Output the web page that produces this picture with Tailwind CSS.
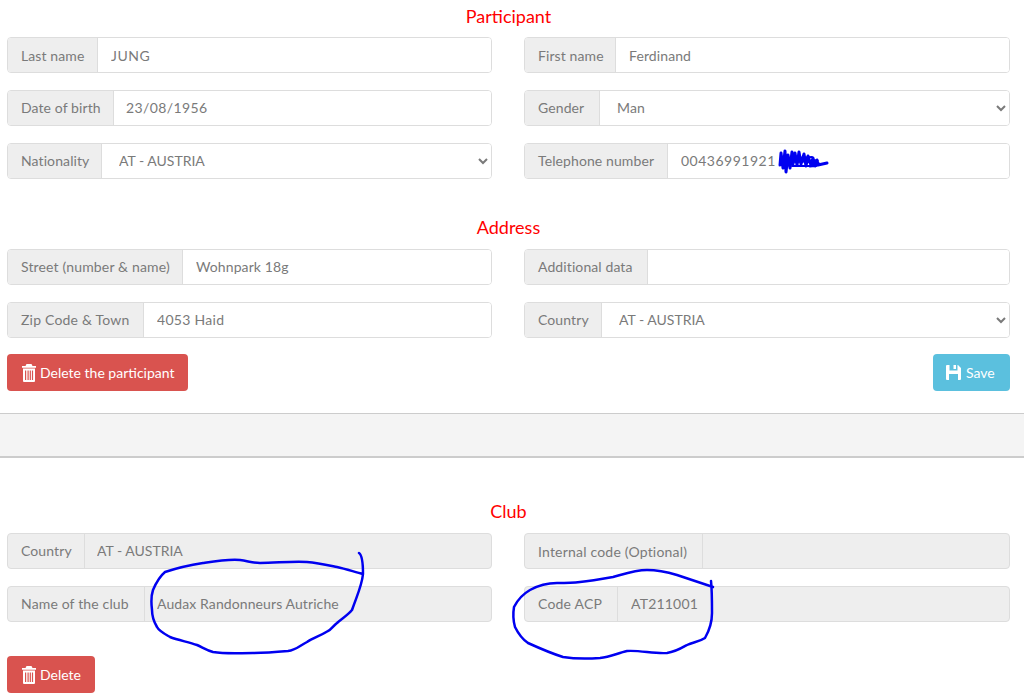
<!DOCTYPE html>
<html lang="en">
<head>
<meta charset="utf-8">
<title>Participant</title>
<script src="https://cdn.jsdelivr.net/npm/@tailwindcss/browser@4"></script>
</head>
<body class="bg-white font-['Lato',sans-serif] text-[14px] tracking-[0.1px] text-[#7a7a7a] overflow-hidden">
<div class="relative h-[700px] w-[1024px] overflow-hidden">

<section class="pl-[7px]">
  <h2 class="h-[37px] pt-[4px] text-center text-[18px] leading-[24px] tracking-normal text-[#ff0000] pr-[14px]">Participant</h2>
  <div class="grid grid-cols-[485px_486px] gap-x-[32px] gap-y-[17px]">
    <div class="flex h-[36px] rounded border border-[#ddd] overflow-hidden"><span class="flex w-[90px] shrink-0 items-center border-r border-[#ddd] bg-[#eee] pl-[13px]">Last name</span><input class="min-w-0 flex-1 bg-white px-[13px] tracking-[0.5px] outline-none" value="JUNG"></div>
    <div class="flex h-[36px] rounded border border-[#ddd] overflow-hidden"><span class="flex w-[91px] shrink-0 items-center border-r border-[#ddd] bg-[#eee] pl-[13px]">First name</span><input class="min-w-0 flex-1 bg-white px-[13px] outline-none" value="Ferdinand"></div>
    <div class="flex h-[36px] rounded border border-[#ddd] overflow-hidden"><span class="flex w-[106px] shrink-0 items-center border-r border-[#ddd] bg-[#eee] pb-[2px] pl-[13px]">Date of birth</span><input class="min-w-0 flex-1 bg-white px-[12px] pb-[2px] tracking-[0.4px] outline-none" value="23/08/1956"></div>
    <div class="flex h-[36px] rounded border border-[#ddd] overflow-hidden"><span class="flex w-[75px] shrink-0 items-center border-r border-[#ddd] bg-[#eee] pb-[2px] pl-[13px]">Gender</span><select class="min-w-0 flex-1 bg-white pb-[2px] pl-[13px] outline-none"><option>Man</option></select></div>
    <div class="flex h-[36px] rounded border border-[#ddd] overflow-hidden"><span class="flex w-[94px] shrink-0 items-center border-r border-[#ddd] bg-[#eee] pb-[2px] pl-[13px]">Nationality</span><select class="min-w-0 flex-1 bg-white pb-[2px] pl-[13px] tracking-normal outline-none"><option>AT - AUSTRIA</option></select></div>
    <div class="flex h-[36px] rounded border border-[#ddd] overflow-hidden"><span class="flex w-[143px] shrink-0 items-center border-r border-[#ddd] bg-[#eee] pb-[2px] pl-[13px]">Telephone number</span><input class="min-w-0 flex-1 bg-white px-[13px] pb-[2px] tracking-[0.5px] outline-none" value="00436991921"></div>
  </div>
</section>

<section class="pl-[7px]">
  <h2 class="h-[70px] pt-[36px] text-center text-[18px] leading-[24px] tracking-normal text-[#ff0000] pr-[14px]">Address</h2>
  <div class="grid grid-cols-[485px_486px] gap-x-[32px] gap-y-[17px]">
    <div class="flex h-[36px] rounded border border-[#ddd] overflow-hidden"><span class="flex w-[175px] shrink-0 items-center border-r border-[#ddd] bg-[#eee] pb-[2px] pl-[13px] tracking-[0.15px]">Street (number &amp; name)</span><input class="min-w-0 flex-1 bg-white px-[13px] pb-[2px] outline-none" value="Wohnpark 18g"></div>
    <div class="flex h-[36px] rounded border border-[#ddd] overflow-hidden"><span class="flex w-[123px] shrink-0 items-center border-r border-[#ddd] bg-[#eee] pb-[2px] pl-[13px]">Additional data</span><input class="min-w-0 flex-1 bg-white px-[13px] outline-none" value=""></div>
    <div class="flex h-[36px] rounded border border-[#ddd] overflow-hidden"><span class="flex w-[136px] shrink-0 items-center border-r border-[#ddd] bg-[#eee] pb-[2px] pl-[13px] tracking-[0.2px]">Zip Code &amp; Town</span><input class="min-w-0 flex-1 bg-white px-[13px] pb-[2px] tracking-[0.3px] outline-none" value="4053 Haid"></div>
    <div class="flex h-[36px] rounded border border-[#ddd] overflow-hidden"><span class="flex w-[77px] shrink-0 items-center border-r border-[#ddd] bg-[#eee] pb-[2px] pl-[13px]">Country</span><select class="min-w-0 flex-1 bg-white pb-[2px] pl-[13px] tracking-normal outline-none"><option>AT - AUSTRIA</option></select></div>
  </div>
  <div class="mt-[16px] flex w-[1003px] justify-between tracking-normal">
    <button class="flex h-[37px] w-[181px] items-center gap-[4px] rounded bg-[#d9534f] pl-[15px] text-white">
      <svg class="h-[18px] w-[14px]" viewBox="0 0 14 18" fill="white"><path fill-rule="evenodd" d="M4.500 0h5L10.500 2H14v1.700H0V2h3.500zM1 4.500h12V17a1 1 0 0 1-1 1H2a1 1 0 0 1-1-1zM3 6.500V16h1.200V6.500zM5.500 6.500V16h1.200V6.500zM7.700 6.500V16h1.200V6.500zM9.900 6.500V16h1.200V6.500z"/></svg>
      Delete the participant
    </button>
    <button class="flex h-[37px] w-[77px] items-center gap-[5px] rounded bg-[#5bc0de] pl-[13px] text-white">
      <svg class="h-[15px] w-[15px]" viewBox="0 0 15 15" fill="white"><path fill-rule="evenodd" d="M1 0h2.500v5.500h8V0H12l3 3v11a1 1 0 0 1-1 1h-2V9H3v6H1a1 1 0 0 1-1-1V1a1 1 0 0 1 1-1zM7.500 0H10v4H7.500z"/></svg>
      Save
    </button>
  </div>
</section>

<div class="mt-[22px] h-[45px] border-t border-b-2 border-t-[#ccc] border-b-[#ccc] bg-[#f4f4f4]"></div>

<section class="pl-[7px]">
  <h2 class="h-[75px] pt-[41px] text-center text-[18px] leading-[24px] tracking-normal text-[#ff0000] pr-[14px]">Club</h2>
  <div class="grid grid-cols-[485px_486px] gap-x-[32px] gap-y-[17px]">
    <div class="flex h-[36px] rounded border border-[#ddd] overflow-hidden bg-[#eee]"><span class="flex w-[77px] shrink-0 items-center border-r border-[#ddd] pb-[2px] pl-[13px]">Country</span><input disabled class="min-w-0 flex-1 px-[12px] pb-[2px] tracking-normal" value="AT - AUSTRIA"></div>
    <div class="flex h-[36px] rounded border border-[#ddd] overflow-hidden bg-[#eee]"><span class="flex w-[178px] shrink-0 items-center border-r border-[#ddd] pl-[13px] tracking-[0.2px]">Internal code (Optional)</span><input disabled class="min-w-0 flex-1 px-[13px]" value=""></div>
    <div class="flex h-[36px] rounded border border-[#ddd] overflow-hidden bg-[#eee]"><span class="flex w-[137px] shrink-0 items-center border-r border-[#ddd] pb-[2px] pl-[13px] tracking-[0.15px]">Name of the club</span><input disabled class="min-w-0 flex-1 px-[12px] pb-[2px]" value="Audax Randonneurs Autriche"></div>
    <div class="flex h-[36px] rounded border border-[#ddd] overflow-hidden bg-[#eee]"><span class="flex w-[93px] shrink-0 items-center border-r border-[#ddd] pb-[2px] pl-[13px] tracking-[0.2px]">Code ACP</span><input disabled class="min-w-0 flex-1 px-[13px] pb-[2px] tracking-[0.2px]" value="AT211001"></div>
  </div>
  <button class="mt-[34px] flex h-[37px] w-[88px] items-center gap-[4px] rounded bg-[#d9534f] pl-[15px] tracking-normal text-white">
    <svg class="h-[18px] w-[14px]" viewBox="0 0 14 18" fill="white"><path fill-rule="evenodd" d="M4.500 0h5L10.500 2H14v1.700H0V2h3.500zM1 4.500h12V17a1 1 0 0 1-1 1H2a1 1 0 0 1-1-1zM3 6.500V16h1.200V6.500zM5.500 6.500V16h1.200V6.500zM7.700 6.500V16h1.200V6.500zM9.900 6.500V16h1.200V6.500z"/></svg>
    Delete
  </button>
</section>

<svg class="pointer-events-none absolute left-0 top-0 h-[700px] w-[1024px]" viewBox="0 0 1024 700" fill="none" stroke="#0000f0" stroke-linecap="round" stroke-linejoin="round">
  <path stroke-width="2.500" d="M359 553C362 555 363 563 363 574C362 585 358 593 352 610C347 616 341 619 337 623C333 626 331 630 328 631C320 636 313 638 307 642C299 646 296 650 288 651C277 652 265 653 253 653C238 653 226 654 213 652C206 650 202 647 197 645C188 642 178 640 170 637C163 633 159 631 157 627C154 622 152 616 152 610C151 602 151 596 153 590C156 583 159 577 165 572C177 568 190 565 203 563C216 561 228 559 240 560C248 561 252 563 260 563C276 563 292 561 307 562C318 563 327 565 337 567C346 569 355 572 363 574"/>
  <path stroke-width="2.500" d="M711 581C712 590 712 602 712 613C712 622 709 631 705 638C699 642 693 642 687 645C680 649 675 652 667 653C654 654 640 650 627 651C618 653 610 657 600 658C587 659 575 659 563 657C550 653 539 648 528 643C522 639 518 633 515 627C513 620 513 613 514 607C518 599 523 594 530 590C539 585 548 583 557 583C565 583 572 583 580 582C591 581 602 579 613 577C624 574 635 570 647 570C657 570 667 572 677 575C689 579 701 583 713 587"/>
  <path stroke-width="3" d="M780 165L781 153L783 168L785 151L786 172L788 155L790 168L792 152L793 164L795 153L797 165L799 152L801 164L804 154L806 166L808 156L811 165L813 158L815 166L817 160L812 163L805 160L818 163L810 166L818 165L827 163"/>
  <path stroke-width="2" d="M797 158L812 157M795 162L818 161M792 166L816 166"/>
</svg>
</div>
</body>
</html>
